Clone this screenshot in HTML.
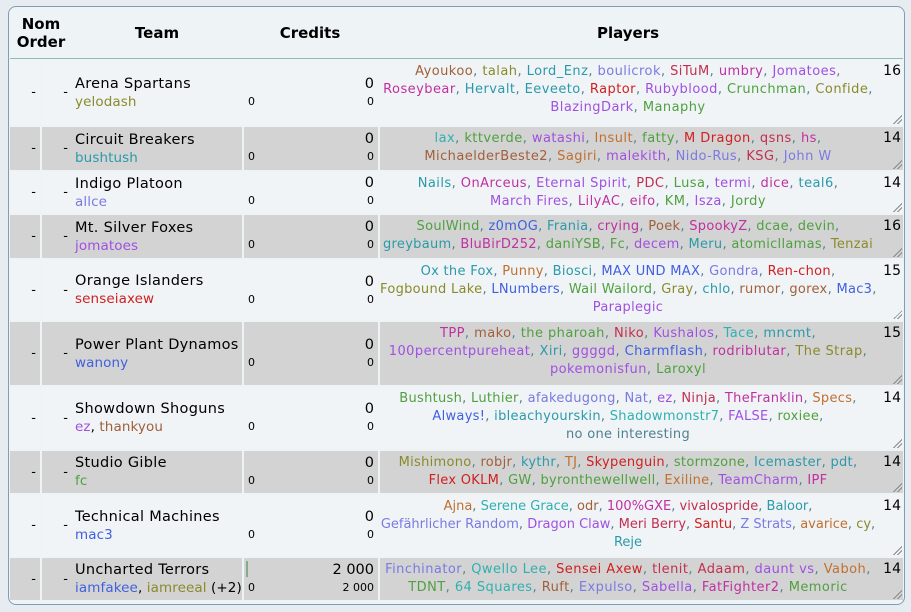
<!DOCTYPE html><html><head><meta charset="utf-8"><style>
body{margin:0;width:911px;height:612px;background:#e6ecf0;font-family:"DejaVu Sans","Liberation Sans",sans-serif;position:relative;overflow:hidden}
.box{position:absolute;left:8px;top:6px;width:895px;height:597px;border:1px solid #7f9db9;border-radius:8px;background:#eef3f6}
.h{position:absolute;top:8px;height:50px;font-weight:bold;font-size:15px;display:flex;align-items:center;justify-content:center;text-align:center;line-height:18px;color:#000}
.hl{position:absolute;left:10px;top:58px;width:893px;height:1px;background:#8fbcb8}
.r{position:absolute;left:10px;width:893px}
.r.g .c{background:#d3d3d3}
.c{position:absolute;top:0;bottom:0;background:#f0f4f7}
.dash{font-size:13px;display:flex;align-items:center;justify-content:flex-end;padding-right:4px;box-sizing:border-box}
.tm{font-size:14.5px;line-height:18px;padding-left:3px;display:flex;flex-direction:column;justify-content:center;box-sizing:border-box;letter-spacing:0.3px;white-space:nowrap}
.tm span{font-size:13.5px;letter-spacing:0.1px}
.cr{font-size:11px}
.cr .a{position:absolute;left:4px;bottom:var(--b)}
.cr .m{position:absolute;right:4px;font-size:14.5px;bottom:calc(var(--b) + 16px)}
.cr .s{position:absolute;right:4px;bottom:var(--b)}
.p{font-size:13px;line-height:18px;text-align:center;padding:3px 0 0;box-sizing:border-box;color:#508090;white-space:nowrap;letter-spacing:0.45px}
.n{font-size:14px;text-align:right;padding:3px 2px 0 0;box-sizing:border-box}
.rz{position:absolute;right:1px;bottom:1px;width:10px;height:10px;background:linear-gradient(135deg,transparent 55%,#888 55%,#888 62%,transparent 62%,transparent 75%,#888 75%,#888 82%,transparent 82%)}
.a1{color:#a0603a}.b{color:#8a8a2a}.t{color:#2a9aaa}.d{color:#7a7ae0}.e{color:#c03050}.f{color:#c030a0}.v{color:#a050e0}.gr{color:#50a040}.i{color:#d02020}.j{color:#30b0b0}.k{color:#4060e0}.o{color:#c07030}
</style></head><body>
<div class="box"></div>
<div class="h" style="left:10px;width:62px">Nom<br>Order</div>
<div class="h" style="left:72px;width:170px">Team</div>
<div class="h" style="left:242px;width:136px">Credits</div>
<div class="h" style="left:378px;width:500px">Players</div>
<div class="hl"></div>

<div class="r" style="top:60px;height:65px">
<div class="c dash" style="left:0;width:30px">-</div><div class="c dash" style="left:32px;width:30px">-</div>
<div class="c tm" style="left:62px;width:170px">Arena Spartans<span class="b">yelodash</span></div>
<div class="c cr" style="left:234px;width:134px;--b:17px"><span class="a">0</span><span class="m">0</span><span class="s">0</span></div>
<div class="c p" style="left:370px;width:496px"><span class="a1">Ayoukoo</span>, <span class="b">talah</span>, <span class="t">Lord_Enz</span>, <span class="d">boulicrok</span>, <span class="e">SiTuM</span>, <span class="f">umbry</span>, <span class="v">Jomatoes</span>,<br><span class="f">Roseybear</span>, <span class="t">Hervalt</span>, <span class="t">Eeveeto</span>, <span class="i">Raptor</span>, <span class="v">Rubyblood</span>, <span class="gr">Crunchman</span>, <span class="b">Confide</span>,<br><span class="v">BlazingDark</span>, <span class="gr">Manaphy</span></div>
<div class="c n" style="left:866px;width:27px">16<div class="rz"></div></div></div>

<div class="r g" style="top:127px;height:43px">
<div class="c dash" style="left:0;width:30px">-</div><div class="c dash" style="left:32px;width:30px">-</div>
<div class="c tm" style="left:62px;width:170px">Circuit Breakers<span class="t">bushtush</span></div>
<div class="c cr" style="left:234px;width:134px;--b:7px"><span class="a">0</span><span class="m">0</span><span class="s">0</span></div>
<div class="c p" style="left:370px;width:496px"><span class="j">lax</span>, <span class="gr">kttverde</span>, <span class="v">watashi</span>, <span class="o">Insult</span>, <span class="gr">fatty</span>, <span class="i">M Dragon</span>, <span class="e">qsns</span>, <span class="f">hs</span>,<br><span class="a1">MichaelderBeste2</span>, <span class="o">Sagiri</span>, <span class="v">malekith</span>, <span class="d">Nido-Rus</span>, <span class="e">KSG</span>, <span class="d">John W</span></div>
<div class="c n" style="left:866px;width:27px">14<div class="rz"></div></div></div>

<div class="r" style="top:172px;height:41px">
<div class="c dash" style="left:0;width:30px">-</div><div class="c dash" style="left:32px;width:30px">-</div>
<div class="c tm" style="left:62px;width:170px">Indigo Platoon<span class="d">allce</span></div>
<div class="c cr" style="left:234px;width:134px;--b:6px"><span class="a">0</span><span class="m">0</span><span class="s">0</span></div>
<div class="c p" style="left:370px;width:496px"><span class="t">Nails</span>, <span class="f">OnArceus</span>, <span class="v">Eternal Spirit</span>, <span class="e">PDC</span>, <span class="gr">Lusa</span>, <span class="v">termi</span>, <span class="f">dice</span>, <span class="t">teal6</span>,<br><span class="v">March Fires</span>, <span class="f">LilyAC</span>, <span class="f">eifo</span>, <span class="gr">KM</span>, <span class="v">Isza</span>, <span class="gr">Jordy</span></div>
<div class="c n" style="left:866px;width:27px">14<div class="rz"></div></div></div>

<div class="r g" style="top:215px;height:43px">
<div class="c dash" style="left:0;width:30px">-</div><div class="c dash" style="left:32px;width:30px">-</div>
<div class="c tm" style="left:62px;width:170px">Mt. Silver Foxes<span class="v">jomatoes</span></div>
<div class="c cr" style="left:234px;width:134px;--b:7px"><span class="a">0</span><span class="m">0</span><span class="s">0</span></div>
<div class="c p" style="left:370px;width:496px;letter-spacing:0.3px"><span class="gr">SoulWind</span>, <span class="k">z0mOG</span>, <span class="t">Frania</span>, <span class="f">crying</span>, <span class="a1">Poek</span>, <span class="f">SpookyZ</span>, <span class="gr">dcae</span>, <span class="gr">devin</span>,<br><span class="t">greybaum</span>, <span class="f">BluBirD252</span>, <span class="gr">daniYSB</span>, <span class="gr">Fc</span>, <span class="v">decem</span>, <span class="t">Meru</span>, <span class="gr">atomicllamas</span>, <span class="b">Tenzai</span></div>
<div class="c n" style="left:866px;width:27px">16<div class="rz"></div></div></div>

<div class="r" style="top:260px;height:60px">
<div class="c dash" style="left:0;width:30px">-</div><div class="c dash" style="left:32px;width:30px">-</div>
<div class="c tm" style="left:62px;width:170px">Orange Islanders<span class="i">senseiaxew</span></div>
<div class="c cr" style="left:234px;width:134px;--b:14px"><span class="a">0</span><span class="m">0</span><span class="s">0</span></div>
<div class="c p" style="left:370px;width:496px;letter-spacing:0.3px"><span class="t">Ox the Fox</span>, <span class="o">Punny</span>, <span class="t">Biosci</span>, <span class="k">MAX UND MAX</span>, <span class="d">Gondra</span>, <span class="i">Ren-chon</span>,<br><span class="b">Fogbound Lake</span>, <span class="k">LNumbers</span>, <span class="gr">Wail Wailord</span>, <span class="b">Gray</span>, <span class="t">chlo</span>, <span class="a1">rumor</span>, <span class="a1">gorex</span>, <span class="k">Mac3</span>,<br><span class="v">Paraplegic</span></div>
<div class="c n" style="left:866px;width:27px">15<div class="rz"></div></div></div>

<div class="r g" style="top:322px;height:63px">
<div class="c dash" style="left:0;width:30px">-</div><div class="c dash" style="left:32px;width:30px">-</div>
<div class="c tm" style="left:62px;width:170px">Power Plant Dynamos<span class="k">wanony</span></div>
<div class="c cr" style="left:234px;width:134px;--b:16px"><span class="a">0</span><span class="m">0</span><span class="s">0</span></div>
<div class="c p" style="left:370px;width:496px"><span class="f">TPP</span>, <span class="a1">mako</span>, <span class="gr">the pharoah</span>, <span class="e">Niko</span>, <span class="v">Kushalos</span>, <span class="j">Tace</span>, <span class="t">mncmt</span>,<br><span class="v">100percentpureheat</span>, <span class="t">Xiri</span>, <span class="v">ggggd</span>, <span class="k">Charmflash</span>, <span class="f">rodriblutar</span>, <span class="b">The Strap</span>,<br><span class="v">pokemonisfun</span>, <span class="gr">Laroxyl</span></div>
<div class="c n" style="left:866px;width:27px">15<div class="rz"></div></div></div>

<div class="r" style="top:387px;height:62px">
<div class="c dash" style="left:0;width:30px">-</div><div class="c dash" style="left:32px;width:30px">-</div>
<div class="c tm" style="left:62px;width:170px">Showdown Shoguns<span><span class="v">ez</span>, <span class="a1">thankyou</span></span></div>
<div class="c cr" style="left:234px;width:134px;--b:16px"><span class="a">0</span><span class="m">0</span><span class="s">0</span></div>
<div class="c p" style="left:370px;width:496px;letter-spacing:0.3px"><span class="gr">Bushtush</span>, <span class="gr">Luthier</span>, <span class="d">afakedugong</span>, <span class="d">Nat</span>, <span class="v">ez</span>, <span class="e">Ninja</span>, <span class="f">TheFranklin</span>, <span class="o">Specs</span>,<br><span class="k">Always!</span>, <span class="t">ibleachyourskin</span>, <span class="j">Shadowmonstr7</span>, <span class="v">FALSE</span>, <span class="gr">roxiee</span>,<br>no one interesting</div>
<div class="c n" style="left:866px;width:27px">14<div class="rz"></div></div></div>

<div class="r g" style="top:451px;height:42px">
<div class="c dash" style="left:0;width:30px">-</div><div class="c dash" style="left:32px;width:30px">-</div>
<div class="c tm" style="left:62px;width:170px">Studio Gible<span class="gr">fc</span></div>
<div class="c cr" style="left:234px;width:134px;--b:6px"><span class="a">0</span><span class="m">0</span><span class="s">0</span></div>
<div class="c p" style="left:370px;width:496px;letter-spacing:0.3px"><span class="b">Mishimono</span>, <span class="a1">robjr</span>, <span class="t">kythr</span>, <span class="o">TJ</span>, <span class="i">Skypenguin</span>, <span class="gr">stormzone</span>, <span class="t">Icemaster</span>, <span class="t">pdt</span>,<br><span class="i">Flex OKLM</span>, <span class="gr">GW</span>, <span class="gr">byronthewellwell</span>, <span class="o">Exiline</span>, <span class="v">TeamCharm</span>, <span class="f">IPF</span></div>
<div class="c n" style="left:866px;width:27px">14<div class="rz"></div></div></div>

<div class="r" style="top:495px;height:61px">
<div class="c dash" style="left:0;width:30px">-</div><div class="c dash" style="left:32px;width:30px">-</div>
<div class="c tm" style="left:62px;width:170px">Technical Machines<span class="k">mac3</span></div>
<div class="c cr" style="left:234px;width:134px;--b:15px"><span class="a">0</span><span class="m">0</span><span class="s">0</span></div>
<div class="c p" style="left:370px;width:496px;letter-spacing:0"><span class="o">Ajna</span>, <span class="j">Serene Grace</span>, <span class="a1">odr</span>, <span class="f">100%GXE</span>, <span class="e">vivalospride</span>, <span class="t">Baloor</span>,<br><span class="d">Gefährlicher Random</span>, <span class="v">Dragon Claw</span>, <span class="e">Meri Berry</span>, <span class="i">Santu</span>, <span class="d">Z Strats</span>, <span class="o">avarice</span>, <span class="b">cy</span>,<br><span class="t">Reje</span></div>
<div class="c n" style="left:866px;width:27px">14<div class="rz"></div></div></div>

<div class="r g" style="top:558px;height:42px">
<div class="c dash" style="left:0;width:30px">-</div><div class="c dash" style="left:32px;width:30px">-</div>
<div class="c tm" style="left:62px;width:170px">Uncharted Terrors<span><span class="k">iamfakee</span>, <span class="b">iamreeal</span> (+2)</span></div>
<div class="c cr" style="left:234px;width:134px;--b:6px"><div style="position:absolute;left:2px;top:3px;width:2px;height:16px;background:#8a8"></div><span class="a">0</span><span class="m">2 000</span><span class="s">2 000</span></div>
<div class="c p" style="left:370px;width:496px"><span class="d">Finchinator</span>, <span class="j">Qwello Lee</span>, <span class="i">Sensei Axew</span>, <span class="e">tlenit</span>, <span class="e">Adaam</span>, <span class="v">daunt vs</span>, <span class="o">Vaboh</span>,<br><span class="gr">TDNT</span>, <span class="j">64 Squares</span>, <span class="a1">Ruft</span>, <span class="d">Expulso</span>, <span class="v">Sabella</span>, <span class="f">FatFighter2</span>, <span class="gr">Memoric</span></div>
<div class="c n" style="left:866px;width:27px">14<div class="rz"></div></div></div>
</body></html>
